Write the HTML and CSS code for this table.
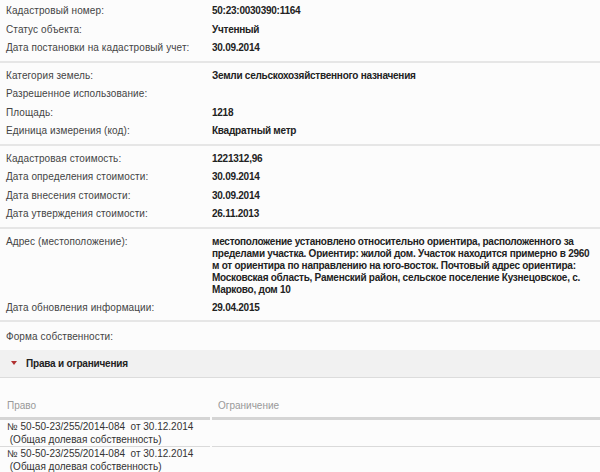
FILE: index.html
```html
<!DOCTYPE html>
<html lang="ru">
<head>
<meta charset="utf-8">
<title>Кадастровый номер</title>
<link rel="stylesheet" href="styles.css">
</head>
<body>
<div class="page">
  <div class="section">
    <div class="row"><div class="label">Кадастровый номер:</div><div class="value">50:23:0030390:1164</div></div>
    <div class="row"><div class="label">Статус объекта:</div><div class="value">Учтенный</div></div>
    <div class="row"><div class="label">Дата постановки на кадастровый учет:</div><div class="value">30.09.2014</div></div>
  </div>
  <div class="section">
    <div class="row"><div class="label">Категория земель:</div><div class="value">Земли сельскохозяйственного назначения</div></div>
    <div class="row"><div class="label">Разрешенное использование:</div><div class="value"></div></div>
    <div class="row"><div class="label">Площадь:</div><div class="value">1218</div></div>
    <div class="row"><div class="label">Единица измерения (код):</div><div class="value">Квадратный метр</div></div>
  </div>
  <div class="section">
    <div class="row"><div class="label">Кадастровая стоимость:</div><div class="value">1221312,96</div></div>
    <div class="row"><div class="label">Дата определения стоимости:</div><div class="value">30.09.2014</div></div>
    <div class="row"><div class="label">Дата внесения стоимости:</div><div class="value">30.09.2014</div></div>
    <div class="row"><div class="label">Дата утверждения стоимости:</div><div class="value">26.11.2013</div></div>
  </div>
  <div class="section">
    <div class="row row-address"><div class="label">Адрес (местоположение):</div><div class="value address">местоположение установлено относительно ориентира, расположенного за пределами участка. Ориентир: жилой дом. Участок находится примерно в 2960 м от ориентира по направлению на юго-восток. Почтовый адрес ориентира: Московская область, Раменский район, сельское поселение Кузнецовское, с. Марково, дом 10</div></div>
    <div class="row"><div class="label">Дата обновления информации:</div><div class="value">29.04.2015</div></div>
  </div>
  <div class="section last">
    <div class="row"><div class="label">Форма собственности:</div><div class="value"></div></div>
  </div>
  <div class="band"><span class="arrow"></span><span class="band-title">Права и ограничения</span></div>
  <div class="rights">
    <div class="th">Право</div>
    <div class="th">Ограничение</div>
    <div class="td">№ 50-50-23/255/2014-084&nbsp; от 30.12.2014<br>&nbsp;(Общая долевая собственность)</div>
    <div class="td"></div>
    <div class="td">№ 50-50-23/255/2014-084&nbsp; от 30.12.2014<br>&nbsp;(Общая долевая собственность)</div>
    <div class="td"></div>
  </div>
</div>
</body>
</html>
```

FILE: styles.css
```css
html, body {
  margin: 0;
  padding: 0;
  background: #fcfcfc;
}
body {
  font-family: "Liberation Sans", Arial, sans-serif;
  font-size: 10px;
  color: #333;
}
.page {
  width: 600px;
}
.section {
  padding: 1px 0 4px;
  border-bottom: 2px solid #e6e6e6;
}
.section + .section {
  padding-top: 3px;
}
.section.last {
  border-bottom: none;
  padding-top: 5px;
  padding-bottom: 4px;
}
.row {
  display: grid;
  grid-template-columns: 206px 1fr;
  padding: 3px 0 2.5px 6px;
  line-height: 13px;
}
.row-address {
  padding-bottom: 2px;
}
.label {
  color: #444;
  letter-spacing: 0.1px;
}
.value {
  font-weight: bold;
  color: #222;
  letter-spacing: -0.25px;
  padding-right: 8px;
}
.address {
  line-height: 12px;
  padding-top: 1px;
}
.band {
  display: flex;
  align-items: center;
  height: 27px;
  background: #f1f1f1;
  border-bottom: 1px solid #dcdcdc;
  padding-left: 11px;
}
.arrow {
  width: 0;
  height: 0;
  border-left: 3px solid transparent;
  border-right: 3px solid transparent;
  border-top: 4px solid #b03030;
  margin-right: 9px;
}
.band-title {
  font-weight: bold;
  color: #222;
  letter-spacing: -0.2px;
}
.rights {
  display: grid;
  grid-template-columns: 210px 1fr;
  column-gap: 2px;
  margin-top: 21px;
}
.th {
  color: #999;
  padding: 0 0 5px 7px;
  line-height: 13px;
  border-bottom: 3px solid #d5d5d5;
}
.th + .th {
  padding-left: 6px;
}
.td {
  padding: 0 0 0 7px;
  line-height: 13px;
  min-height: 25px;
  border-bottom: 1px solid #dadada;
  color: #333;
}
```
